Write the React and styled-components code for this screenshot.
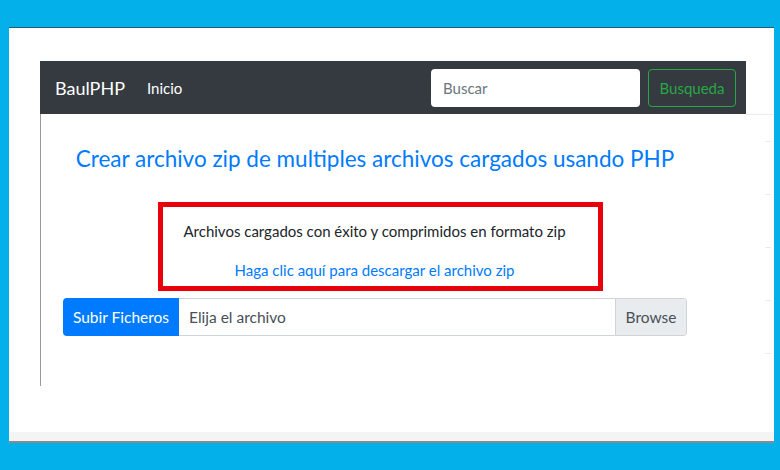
import React from "react";
import styled, { createGlobalStyle } from "styled-components";

const Global = createGlobalStyle`
  html, body { margin: 0; padding: 0; }
  body {
    background: #03b0ea;
    width: 780px;
    height: 470px;
    overflow: hidden;
    font-family: Lato, "Open Sans", sans-serif;
  }
`;

const Frame = styled.div`
  margin: 27px 6px 0 9px;
  border-top: 1px solid #17607f;
  background: #fff;
  box-shadow: 0 2px 0 #8a8a8a;
`;

const Page = styled.div`
  padding: 33px 0 0 31px;
  display: flex;
  box-sizing: border-box;
  height: 404px;
`;

const Main = styled.div`
  width: 706px;
  display: flex;
  flex-direction: column;
`;

const Aside = styled.div`
  flex: 1;
  padding-top: 53px;
  display: flex;
  flex-direction: column;
`;

const Tick = styled.div`
  height: ${(p) => p.h}px;
  border-top: 1px solid #ececec;
  margin-left: ${(p) => p.indent}px;
  width: ${(p) => (p.w ? p.w + "px" : "auto")};
`;

const FooterStrip = styled.div`
  height: 9px;
  background: #f4f4f4;
`;

const Navbar = styled.nav`
  height: 53px;
  background: #343a40;
  display: flex;
  align-items: center;
  padding: 0 10px 0 15px;
  box-sizing: border-box;
`;

const Brand = styled.span`
  color: #fff;
  font-size: 18px;
  margin-right: 22px;
`;

const NavLink = styled.span`
  color: #fff;
  font-size: 15px;
  flex: 1;
`;

const SearchInput = styled.div`
  width: 209px;
  height: 38px;
  box-sizing: border-box;
  background: #fff;
  border-radius: 4px;
  display: flex;
  align-items: center;
  padding-left: 12px;
  color: #6c757d;
  font-size: 15px;
  margin-right: 8px;
`;

const OutlineButton = styled.div`
  width: 88px;
  height: 38px;
  box-sizing: border-box;
  border: 1px solid #28a745;
  border-radius: 4px;
  color: #28a745;
  font-size: 15px;
  display: flex;
  align-items: center;
  justify-content: center;
`;

const Content = styled.div`
  height: 272px;
  border-left: 1px solid #9a9a9a;
  padding-left: 22px;
  box-sizing: border-box;
`;

const Container = styled.div`
  width: 624px;
  display: flex;
  flex-direction: column;
`;

const Title = styled.h1`
  margin: 30px 0 0;
  text-align: center;
  color: #007bff;
  font-weight: 400;
  font-size: 22.5px;
  line-height: 30px;
`;

const Highlight = styled.div`
  margin: 28px 0 0 95px;
  width: 445px;
  height: 89px;
  box-sizing: border-box;
  border: 5px solid #e8000b;
  padding: 13px 12px 0 0;
  display: flex;
  flex-direction: column;
  align-items: center;
  font-size: 15px;
`;

const Message = styled.p`
  margin: 0;
  color: #212529;
  line-height: 22px;
`;

const DownloadLink = styled.a`
  margin-top: 17px;
  color: #007bff;
  text-decoration: none;
  line-height: 22px;
`;

const InputGroup = styled.div`
  margin-top: 7px;
  height: 38px;
  display: flex;
  font-size: 15.5px;
`;

const Prepend = styled.div`
  width: 116px;
  background: #007bff;
  color: #fff;
  border-radius: 4px 0 0 4px;
  display: flex;
  align-items: center;
  justify-content: center;
`;

const FileLabel = styled.div`
  flex: 1;
  border: 1px solid #ced4da;
  border-left: none;
  border-radius: 0 4px 4px 0;
  display: flex;
  align-items: stretch;
  color: #495057;
  overflow: hidden;
`;

const FileText = styled.span`
  flex: 1;
  display: flex;
  align-items: center;
  padding-left: 10px;
`;

const BrowseButton = styled.span`
  width: 70px;
  background: #e9ecef;
  border-left: 1px solid #ced4da;
  display: flex;
  align-items: center;
  justify-content: center;
`;

export default function App() {
  return (
    <>
      <Global />
      <Frame>
        <Page>
          <Main>
            <Navbar>
              <Brand>BaulPHP</Brand>
              <NavLink>Inicio</NavLink>
              <SearchInput>Buscar</SearchInput>
              <OutlineButton>Busqueda</OutlineButton>
            </Navbar>
            <Content>
              <Container>
                <Title>Crear archivo zip de multiples archivos cargados usando PHP</Title>
                <Highlight>
                  <Message>Archivos cargados con éxito y comprimidos en formato zip</Message>
                  <DownloadLink href="#">Haga clic aquí para descargar el archivo zip</DownloadLink>
                </Highlight>
                <InputGroup>
                  <Prepend>Subir Ficheros</Prepend>
                  <FileLabel>
                    <FileText>Elija el archivo</FileText>
                    <BrowseButton>Browse</BrowseButton>
                  </FileLabel>
                </InputGroup>
              </Container>
            </Content>
          </Main>
          <Aside>
            <Tick h={26} indent={0} />
            <Tick h={52} indent={19} w={6} />
            <Tick h={52} indent={19} w={6} />
            <Tick h={52} indent={19} w={6} />
            <Tick h={52} indent={19} w={6} />
            <Tick h={20} indent={19} w={6} />
          </Aside>
        </Page>
        <FooterStrip />
      </Frame>
    </>
  );
}
